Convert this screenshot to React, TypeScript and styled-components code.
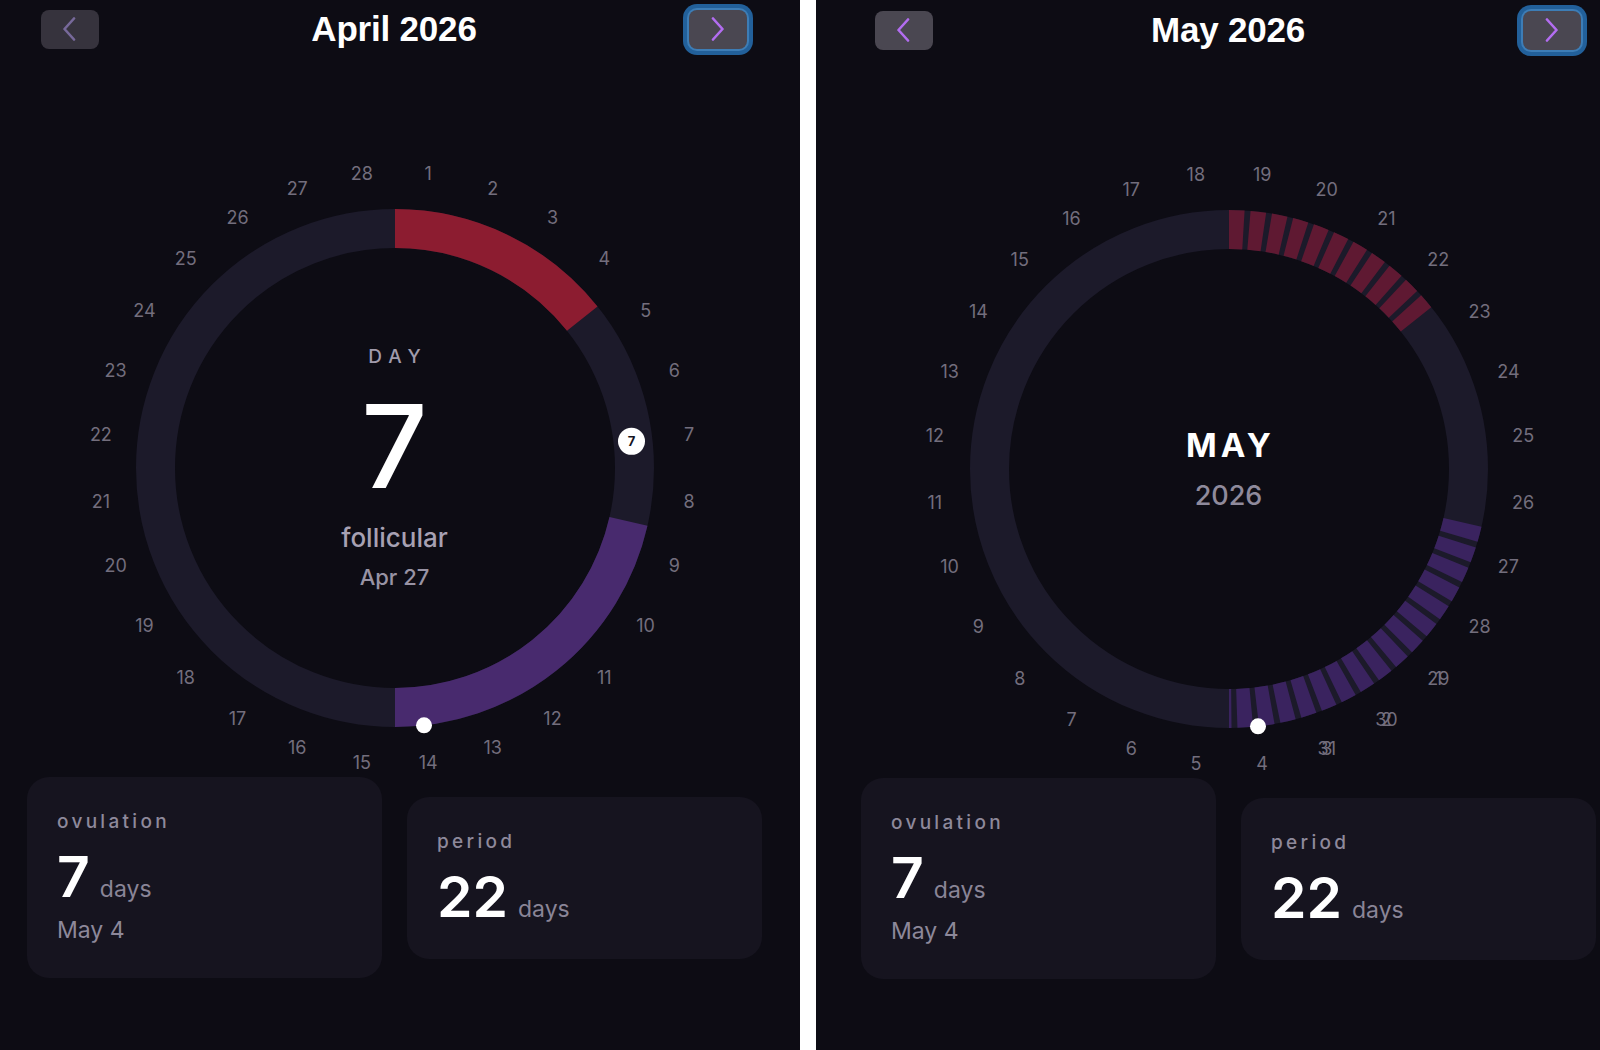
import React from "react";
import styled, { createGlobalStyle } from "styled-components";

const GlobalStyle = createGlobalStyle`
  html, body { margin: 0; padding: 0; }
  body {
    background: #ffffff;
    font-family: Inter, "Noto Sans", sans-serif;
    -webkit-font-smoothing: antialiased;
  }
  #root { width: 1600px; height: 1050px; overflow: hidden; }
`;

/* ---------- geometry of the cycle dial ---------- */
const DIAL_W = 620;
const DIAL_H = 618;
const CX = 310;
const CY = 309;
const R_TRACK = 239.5;
const TRACK_WIDTH = 39;
const R_OUTER = 259;
const R_LABEL = 296;
const SLOTS = 28;
const STEP = 360 / SLOTS;

const polar = (r: number, deg: number): [number, number] => {
  const a = (deg * Math.PI) / 180;
  return [CX + r * Math.sin(a), CY - r * Math.cos(a)];
};

const arcPath = (r: number, a0: number, a1: number) => {
  const [x0, y0] = polar(r, a0);
  const [x1, y1] = polar(r, a1);
  const large = a1 - a0 > 180 ? 1 : 0;
  return `M ${x0} ${y0} A ${r} ${r} 0 ${large} 1 ${x1} ${y1}`;
};

const slotAngle = (slot: number) => (slot - 0.5) * STEP;

/* ---------- styled parts ---------- */
const Page = styled.main`
  display: flex;
  width: 1600px;
  height: 1050px;
  background: #ffffff;
`;

const Pane = styled.section<{ $width: number; $inset: number; $drop: number }>`
  flex: none;
  width: ${(p) => p.$width}px;
  height: 100%;
  box-sizing: border-box;
  padding: ${(p) => p.$drop}px 0 0 ${(p) => p.$inset}px;
  background: #0d0c14;
  overflow: hidden;
`;

const Divider = styled.div`
  flex: none;
  width: 16px;
  background: #ffffff;
`;

const Column = styled.div`
  width: 735px;
  display: flex;
  flex-direction: column;
`;

const Header = styled.header`
  display: flex;
  align-items: center;
  justify-content: space-between;
  padding: 9px 15px 0 14px;
`;

const Title = styled.h1`
  margin: 0;
  font-family: "Liberation Sans", Arial, sans-serif;
  font-weight: 700;
  font-size: 35px;
  line-height: 40px;
  letter-spacing: -0.2px;
  color: #ffffff;
`;

const NavButton = styled.button<{ $muted?: boolean; $focused?: boolean }>`
  width: 58px;
  height: 39px;
  padding: 0;
  border: none;
  border-radius: 8px;
  display: flex;
  align-items: center;
  justify-content: center;
  cursor: pointer;
  background: ${(p) => (p.$muted ? "#36333d" : "#4a4751")};
  color: ${(p) => (p.$muted ? "#77699a" : "#b36df1")};
  box-shadow: ${(p) =>
    p.$focused ? "0 0 0 2px #3d7db6, 0 0 0 6px #22609a" : "none"};
`;

const DialWrap = styled.div`
  position: relative;
  align-self: center;
  width: ${DIAL_W}px;
  height: ${DIAL_H}px;
  margin-top: 110px;
`;

const DialSvg = styled.svg`
  display: block;
  width: ${DIAL_W}px;
  height: ${DIAL_H}px;
`;

const DayLabel = styled.text`
  font-family: Inter, "Noto Sans", sans-serif;
  font-size: 18px;
  font-weight: 400;
  fill: #736e7d;
`;

const MarkerText = styled.text`
  font-family: Inter, "Noto Sans", sans-serif;
  font-size: 13px;
  font-weight: 700;
  fill: #15131f;
`;

const CenterStack = styled.div`
  position: absolute;
  inset: 0;
  display: flex;
  flex-direction: column;
  align-items: center;
  justify-content: center;
  pointer-events: none;
`;

const Caption = styled.div`
  font-size: 19px;
  line-height: 24px;
  font-weight: 500;
  letter-spacing: 7px;
  padding-left: 7px;
  color: #a09bab;
`;

const BigDay = styled.div`
  margin-top: 19px;
  font-size: 116px;
  line-height: 116px;
  font-weight: 500;
  color: #ffffff;
`;

const Phase = styled.div`
  margin-top: 18px;
  font-size: 26px;
  line-height: 32px;
  font-weight: 500;
  color: #a7a1b3;
`;

const PhaseDate = styled.div`
  margin-top: 9px;
  font-size: 22px;
  line-height: 28px;
  font-weight: 500;
  color: #9893a4;
`;

const MonthName = styled.div`
  font-size: 33px;
  line-height: 40px;
  font-weight: 700;
  letter-spacing: 4px;
  padding-left: 4px;
  color: #ffffff;
`;

const MonthYear = styled.div`
  margin-top: 14px;
  font-size: 27px;
  line-height: 34px;
  font-weight: 500;
  color: #8f8a9c;
`;

const Cards = styled.div`
  display: flex;
  align-items: center;
  gap: 25px;
`;

const Card = styled.div`
  flex: 1;
  display: flex;
  flex-direction: column;
  padding: 33px 30px 34px;
  border-radius: 22px;
  background: #16141f;
`;

const CardLabel = styled.div`
  font-size: 19px;
  line-height: 24px;
  font-weight: 500;
  letter-spacing: 3.3px;
  color: #8e899b;
`;

const ValueRow = styled.div`
  display: flex;
  align-items: baseline;
  gap: 10px;
  margin-top: 15px;
`;

const Value = styled.span`
  font-size: 57px;
  line-height: 56px;
  font-weight: 600;
  color: #ffffff;
`;

const Unit = styled.span`
  font-size: 23px;
  font-weight: 400;
  color: #8a8597;
`;

const CardNote = styled.div`
  margin-top: 12px;
  font-size: 23px;
  line-height: 27px;
  color: #8d889a;
`;

/* ---------- pieces ---------- */
const Chevron = ({ dir }: { dir: "left" | "right" }) => (
  <svg width="14" height="24" viewBox="0 0 14 24" fill="none">
    <polyline
      points={dir === "left" ? "11,1.5 1.5,12 11,22.5" : "2,1.5 11.5,12 2,22.5"}
      stroke="currentColor"
      strokeWidth="2.6"
      strokeLinecap="round"
      strokeLinejoin="round"
    />
  </svg>
);

type Label = { slot: number; text: string };

type DialProps = {
  labels: Label[];
  periodColor: string;
  fertileColor: string;
  striped?: boolean;
  today?: { slot: number; text: string };
  ovulationSlot: number;
  children: React.ReactNode;
};

const Dial = ({
  labels,
  periodColor,
  fertileColor,
  striped,
  today,
  ovulationSlot,
  children,
}: DialProps) => {
  const dash = striped ? "14.5 5.5" : undefined;
  const [dotX, dotY] = polar(R_OUTER, slotAngle(ovulationSlot));
  return (
    <DialWrap>
      <DialSvg viewBox={`0 0 ${DIAL_W} ${DIAL_H}`}>
        <circle cx={CX} cy={CY} r={R_TRACK} fill="none" stroke="#1c1a2a" strokeWidth={TRACK_WIDTH} />
        <path
          d={arcPath(R_TRACK, 0, 4 * STEP)}
          fill="none"
          stroke={periodColor}
          strokeWidth={TRACK_WIDTH}
          strokeDasharray={dash}
        />
        <path
          d={arcPath(R_TRACK, 8 * STEP, 14 * STEP)}
          fill="none"
          stroke={fertileColor}
          strokeWidth={TRACK_WIDTH}
          strokeDasharray={dash}
        />
        {labels.map((l, i) => {
          const [x, y] = polar(R_LABEL, slotAngle(l.slot));
          return (
            <DayLabel key={i} x={x} y={y} dy="0.36em" textAnchor="middle">
              {l.text}
            </DayLabel>
          );
        })}
        {today &&
          (() => {
            const [tx, ty] = polar(238, slotAngle(today.slot));
            return (
              <g>
                <circle cx={tx} cy={ty} r={13.5} fill="#ffffff" />
                <MarkerText x={tx} y={ty} dy="0.36em" textAnchor="middle">
                  {today.text}
                </MarkerText>
              </g>
            );
          })()}
        <circle cx={dotX} cy={dotY} r={8} fill="#ffffff" />
      </DialSvg>
      <CenterStack>{children}</CenterStack>
    </DialWrap>
  );
};

const aprilLabels: Label[] = Array.from({ length: 28 }, (_, i) => ({
  slot: i + 1,
  text: String(i + 1),
}));

// May's days wrap onto the 28-slot cycle starting from the 19th
const mayLabels: Label[] = Array.from({ length: 31 }, (_, i) => {
  const day = i + 1;
  return { slot: ((day - 19 + 56) % 28) + 1, text: String(day) };
});

const Summary = () => (
  <Cards>
    <Card>
      <CardLabel>ovulation</CardLabel>
      <ValueRow>
        <Value>7</Value>
        <Unit>days</Unit>
      </ValueRow>
      <CardNote>May 4</CardNote>
    </Card>
    <Card>
      <CardLabel>period</CardLabel>
      <ValueRow>
        <Value>22</Value>
        <Unit>days</Unit>
      </ValueRow>
    </Card>
  </Cards>
);

export default function App() {
  return (
    <>
      <GlobalStyle />
      <Page>
        <Pane $width={800} $inset={27} $drop={0}>
          <Column>
            <Header>
              <NavButton $muted aria-label="Previous month">
                <Chevron dir="left" />
              </NavButton>
              <Title>April 2026</Title>
              <NavButton $focused aria-label="Next month">
                <Chevron dir="right" />
              </NavButton>
            </Header>
            <Dial
              labels={aprilLabels}
              periodColor="#8c1c30"
              fertileColor="#482a6e"
              today={{ slot: 7, text: "7" }}
              ovulationSlot={14}
            >
              <Caption>DAY</Caption>
              <BigDay>7</BigDay>
              <Phase>follicular</Phase>
              <PhaseDate>Apr 27</PhaseDate>
            </Dial>
            <Summary />
          </Column>
        </Pane>
        <Divider />
        <Pane $width={784} $inset={45} $drop={1}>
          <Column>
            <Header>
              <NavButton aria-label="Previous month">
                <Chevron dir="left" />
              </NavButton>
              <Title>May 2026</Title>
              <NavButton $focused aria-label="Next month">
                <Chevron dir="right" />
              </NavButton>
            </Header>
            <Dial
              labels={mayLabels}
              periodColor="#5f1932"
              fertileColor="#3a235f"
              striped
              ovulationSlot={14}
            >
              <MonthName>MAY</MonthName>
              <MonthYear>2026</MonthYear>
            </Dial>
            <Summary />
          </Column>
        </Pane>
      </Page>
    </>
  );
}
